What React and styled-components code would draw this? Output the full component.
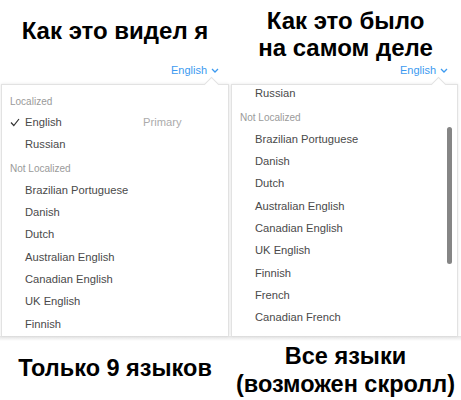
import React, { useLayoutEffect, useRef } from "react";
import styled, { createGlobalStyle } from "styled-components";

const Global = createGlobalStyle`
  html, body { margin: 0; padding: 0; background: #fff; }
  body { font-family: "Liberation Sans", Arial, sans-serif; }
`;

const Page = styled.div`
  width: 461px;
  height: 400px;
  display: flex;
  flex-direction: column;
  background: #fff;
  overflow: hidden;
`;

const Panels = styled.div`
  display: grid;
  grid-template-columns: 230px 231px;
`;

const Column = styled.div`
  display: flex;
  flex-direction: column;
`;

const Title = styled.h1`
  margin: 0;
  height: 62px;
  display: flex;
  align-items: center;
  justify-content: center;
  text-align: center;
  font-size: 24px;
  line-height: 27.5px;
  font-weight: 700;
  color: #000;
  white-space: nowrap;
  padding-top: ${(p) => p.$pt || 0}px;
  box-sizing: border-box;
`;

const LinkRow = styled.div`
  height: 16px;
  display: flex;
  justify-content: flex-end;
  align-items: center;
  padding-right: ${(p) => p.$pr}px;
`;

const LangLink = styled.span`
  display: inline-flex;
  align-items: center;
  gap: 4px;
  font-family: "Liberation Sans", Arial, sans-serif;
  font-size: 11px;
  color: #3c9af0;
`;

const Popover = styled.div`
  position: relative;
  margin: 6px ${(p) => p.$mr}px 0 1px;
  height: 252px;
  background: #fff;
  border: 1px solid #e2e2e2;
  border-bottom: none;
  box-sizing: border-box;
  box-shadow: 0 0 3px rgba(0, 0, 0, 0.1);
`;

const Notch = styled.div`
  position: absolute;
  top: -6px;
  right: ${(p) => p.$right}px;
  width: 10px;
  height: 10px;
  background: #fff;
  border-left: 1px solid #e2e2e2;
  border-top: 1px solid #e2e2e2;
  transform: rotate(45deg);
`;

const Scroller = styled.div`
  position: relative;
  height: 100%;
  overflow: ${(p) => (p.$scroll ? "auto" : "hidden")};
  scrollbar-width: none;
  &::-webkit-scrollbar { display: none; }
`;

const List = styled.div`
  padding-top: 6px;
  padding-bottom: 6px;
`;

const Header = styled.div`
  height: 20px;
  margin-top: ${(p) => (p.$first ? 0 : 3)}px;
  display: flex;
  align-items: center;
  padding-left: 8px;
  font-size: 10px;
  color: #9a9a9a;
`;

const Item = styled.div`
  height: 22.33px;
  display: flex;
  align-items: center;
  position: relative;
  padding-left: 23px;
  font-size: 11.2px;
  color: #4a4a4a;
`;

const Check = styled.svg`
  position: absolute;
  left: 8px;
  top: 7px;
`;

const Primary = styled.span`
  position: absolute;
  left: 141px;
  color: #ababab;
`;

const Thumb = styled.div`
  position: absolute;
  right: 5px;
  top: 42px;
  width: 5px;
  height: 137px;
  border-radius: 3px;
  background: #858585;
`;

const Divider = styled.div`
  height: 5px;
  background: linear-gradient(#e4e4e4, #f6f6f6 70%, #fff);
`;

const Captions = styled.div`
  display: grid;
  grid-template-columns: 230px 231px;
  flex: 1;
`;

const Caption = styled.div`
  display: flex;
  align-items: center;
  justify-content: center;
  text-align: center;
  font-size: 23.5px;
  line-height: 28px;
  font-weight: 700;
  color: #000;
  white-space: nowrap;
  padding-bottom: ${(p) => p.$pb || 0}px;
`;

const notLocalized = [
  "Brazilian Portuguese",
  "Danish",
  "Dutch",
  "Australian English",
  "Canadian English",
  "UK English",
  "Finnish",
  "French",
  "Canadian French",
  "German",
  "Greek",
  "Indonesian",
  "Italian",
  "Japanese",
  "Korean",
];

function Chevron() {
  return (
    <svg width="8" height="5" viewBox="0 0 8 5">
      <polyline points="1,1 4,4 7,1" fill="none" stroke="#3c9af0" strokeWidth="1.3" />
    </svg>
  );
}

function LanguageList({ limit }) {
  const others = limit ? notLocalized.slice(0, limit) : notLocalized;
  return (
    <List>
      <Header $first>Localized</Header>
      <Item>
        <Check width="10" height="9" viewBox="0 0 10 9">
          <polyline points="1,4.5 3.8,7.5 9,1" fill="none" stroke="#333" strokeWidth="1.2" />
        </Check>
        English
        <Primary>Primary</Primary>
      </Item>
      <Item>Russian</Item>
      <Header>Not Localized</Header>
      {others.map((l) => (
        <Item key={l}>{l}</Item>
      ))}
    </List>
  );
}

export default function App() {
  const ref = useRef(null);
  useLayoutEffect(() => {
    if (ref.current) ref.current.scrollTop = 51;
  }, []);
  return (
    <Page>
      <Global />
      <Panels>
        <Column>
          <Title $pt={0}>Как это видел я</Title>
          <LinkRow $pr={11}>
            <LangLink>
              English <Chevron />
            </LangLink>
          </LinkRow>
          <Popover $mr={1}>
            <Notch $right={11} />
            <Scroller>
              <LanguageList limit={7} />
            </Scroller>
          </Popover>
        </Column>
        <Column>
          <Title $pt={6}>
            Как это было
            <br />
            на самом деле
          </Title>
          <LinkRow $pr={13}>
            <LangLink>
              English <Chevron />
            </LangLink>
          </LinkRow>
          <Popover $mr={3}>
            <Notch $right={13} />
            <Scroller $scroll ref={ref}>
              <LanguageList />
            </Scroller>
            <Thumb />
          </Popover>
        </Column>
      </Panels>
      <Divider />
      <Captions>
        <Caption $pb={6}>Только 9 языков</Caption>
        <Caption $pb={2}>
          Все языки
          <br />
          (возможен скролл)
        </Caption>
      </Captions>
    </Page>
  );
}
